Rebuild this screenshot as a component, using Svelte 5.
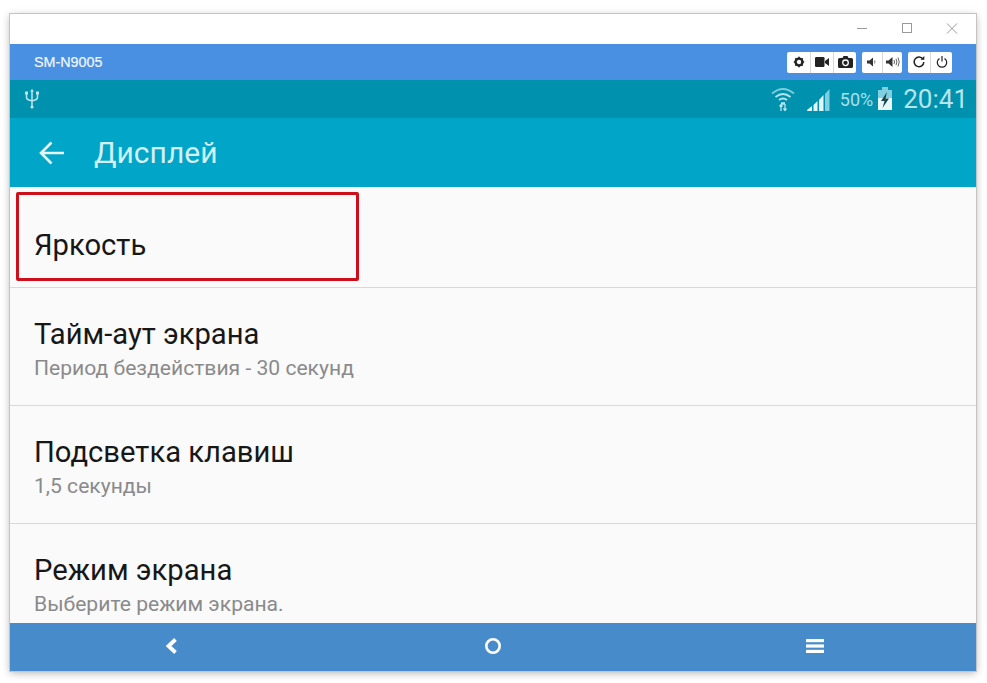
<script>
  const rows = [
    { title: "Тайм-аут экрана", sub: "Период бездействия - 30 секунд" },
    { title: "Подсветка клавиш", sub: "1,5 секунды" },
    { title: "Режим экрана", sub: "Выберите режим экрана." }
  ];
</script>

<main>
  <div class="window">
    <div class="titlebar">
      <svg class="winbtn" width="126" height="30" viewBox="0 0 126 30" fill="none" stroke="#9a9a9a" stroke-width="1">
        <path d="M12 14.500h10" />
        <rect x="57.500" y="9.500" width="9" height="9" />
        <path d="M102 9.500l10 10M112 9.500l-10 10" />
      </svg>
    </div>

    <div class="devicebar">
      <span class="devname">SM-N9005</span>
      <div class="tools">
        <div class="group">
          <button aria-label="settings">
            <svg width="12" height="12" viewBox="0 0 12 12">
              <circle cx="6" cy="6" r="3.400" fill="none" stroke="#222" stroke-width="2.400" />
              <path d="M6 .8v2M6 9.200v2M.8 6h2M9.200 6h2M2.300 2.300l1.400 1.400M8.300 8.300l1.400 1.400M9.700 2.300L8.300 3.700M3.700 8.300L2.300 9.700" stroke="#222" stroke-width="1.700" />
            </svg>
          </button>
          <button aria-label="video">
            <svg width="14" height="10" viewBox="0 0 14 10"><rect y="0" width="9.500" height="10" rx="1.200" fill="#222" /><path d="M10 4l4-3v8l-4-3z" fill="#222" /></svg>
          </button>
          <button aria-label="photo">
            <svg width="15" height="12" viewBox="0 0 15 12">
              <path d="M1.500 2h3l1-2h4l1 2h3A1.500 1.500 0 0 1 15 3.500V10.500A1.500 1.500 0 0 1 13.500 12H1.500A1.500 1.500 0 0 1 0 10.500V3.500A1.500 1.500 0 0 1 1.500 2z" fill="#222" />
              <circle cx="7.500" cy="6.800" r="2.800" fill="none" stroke="#fff" stroke-width="1.300" />
            </svg>
          </button>
        </div>
        <div class="group">
          <button class="narrow" aria-label="volume down">
            <svg width="10" height="10" viewBox="0 0 10 10"><path d="M0 3.500h2.500L6 .5v9L2.500 6.500H0z" fill="#333" /><path d="M7.500 3.500q1 1.500 0 3" fill="none" stroke="#777" /></svg>
          </button>
          <button class="narrow" aria-label="volume up">
            <svg width="14" height="12" viewBox="0 0 14 12"><path d="M0 4.500h2.500L6.500 1v10L2.500 7.500H0z" fill="#333" /><path d="M8 4q1 2 0 4M10 2.800q1.800 3.200 0 6.400M12 1.500q2.500 4.500 0 9" fill="none" stroke="#666" /></svg>
          </button>
        </div>
        <div class="group">
          <button class="narrow" aria-label="rotate">
            <svg width="12" height="12" viewBox="0 0 12 12"><path d="M10 3.200A4.800 4.800 0 1 0 10.800 6" fill="none" stroke="#222" stroke-width="1.500" /><path d="M7.500 3.800h3.800V0z" fill="#222" /></svg>
          </button>
          <button class="narrow" aria-label="power">
            <svg width="12" height="12" viewBox="0 0 12 12"><path d="M3.500 2.500a4.700 4.700 0 1 0 5 0" fill="none" stroke="#222" stroke-width="1.200" /><path d="M6 0v5.500" stroke="#222" stroke-width="1.200" /></svg>
          </button>
        </div>
      </div>
    </div>

    <div class="statusbar">
      <svg class="usb" width="14" height="20" viewBox="0 0 14 20" fill="none" stroke="#bfe6ee" stroke-width="1.500">
        <path d="M7 2v15.500M1.500 5v3q0 2.500 2.500 3l3 1 3-1q2.500-.5 2.500-3V5" />
        <path d="M7 0l2 2.500H5z" fill="#bfe6ee" stroke="none" />
        <circle cx="7" cy="18" r="1.600" fill="#bfe6ee" stroke="none" />
        <rect x="0" y="2.500" width="3" height="3" fill="#bfe6ee" stroke="none" />
        <rect x="11" y="2.500" width="3" height="3" fill="#bfe6ee" stroke="none" />
      </svg>
      <div class="status-right">
        <svg width="24" height="26" viewBox="0 0 24 26" fill="none" stroke="#b5e5ee" stroke-width="1.800">
          <path d="M1 7.500q11-9 22 0" stroke-opacity=".7" />
          <path d="M4.500 11q7.500-6 15 0" />
          <path d="M8 14q4-3 8 0" />
          <path d="M10 17.500h4" stroke-width="2.500" />
          <path d="M10 25v-6M8.500 20.500l1.500-2 1.500 2M14 18v6M12.500 22.500l1.500 2 1.500-2" stroke-width="1.300" />
        </svg>
        <svg class="signal" width="24" height="24" viewBox="0 0 24 24">
          <path d="M1 24v-1l5-4v5zM7.500 24v-6l4-4v10zM13 24V13l4.500-5v16z" fill="#e2f5f8" />
          <path d="M19 24V7l4.500-5v22z" fill="#7fcfe0" />
        </svg>
        <span class="pct">50%</span>
        <svg class="batt" width="16" height="24" viewBox="0 0 16 24">
          <path d="M5 0h6v3H5z" fill="#7fcfe0" />
          <rect x="1" y="3" width="14" height="8" fill="#7fcfe0" />
          <rect x="1" y="11" width="14" height="12" fill="#e8f8fa" />
          <path d="M10 5l-6 9h3.500l-2 7 6.500-9.500H8.500z" fill="#17474f" />
        </svg>
        <span class="clock">20:41</span>
      </div>
    </div>

    <header class="appbar">
      <svg width="26" height="24" viewBox="0 0 26 24" fill="none" stroke="#e6f7fa" stroke-width="2.600">
        <path d="M25 12H2M12.500 1.500L2 12l10.500 10.500" />
      </svg>
      <h1>Дисплей</h1>
    </header>

    <section class="list">
      <div class="row first">
        <div class="highlight"></div>
        <p class="title">Яркость</p>
      </div>
      {#each rows as row}
        <div class="row">
          <p class="title">{row.title}</p>
          <p class="sub">{row.sub}</p>
        </div>
      {/each}
    </section>

    <nav class="navbar">
      <svg width="14" height="18" viewBox="0 0 14 18" fill="none" stroke="#fff" stroke-width="3.800">
        <path d="M11.500 2.500L4.500 9l7 6.500" />
      </svg>
      <svg width="18" height="18" viewBox="0 0 18 18" fill="none" stroke="#fff" stroke-width="2.600">
        <circle cx="9" cy="9" r="6.700" />
      </svg>
      <svg width="18" height="14" viewBox="0 0 18 14" fill="#fff">
        <rect y="0" width="18" height="3.200" />
        <rect y="5.400" width="18" height="3.200" />
        <rect y="10.800" width="18" height="3.200" />
      </svg>
    </nav>
  </div>
</main>

<style>
  :global(body) {
    background: #fff;
  }

  main {
    padding: 14px 11px 12px 10px;
    font-family: Roboto, "Noto Sans", sans-serif;
  }

  .window {
    display: flex;
    flex-direction: column;
    height: 657px;
    background: #fafafa;
    box-shadow: 0 0 0 1px #c4c4c4, 0 2px 8px rgba(0, 0, 0, 0.3);
  }

  .titlebar {
    display: flex;
    justify-content: flex-end;
    height: 30px;
    background: #fff;
  }

  .winbtn {
    margin-right: 5px;
  }

  .devicebar {
    display: flex;
    align-items: center;
    justify-content: space-between;
    height: 36px;
    padding: 0 24px;
    background: #4a90e2;
  }

  .devname {
    font-family: "Liberation Sans", sans-serif;
    font-size: 14.300px;
    font-weight: 400;
    color: #f2f7fd;
    -webkit-text-stroke: 0.2px #f2f7fd;
  }

  .tools {
    display: flex;
    gap: 6px;
  }

  .group {
    display: flex;
    height: 21px;
    background: #fff;
    border-radius: 2px;
  }

  .group button {
    display: flex;
    align-items: center;
    justify-content: center;
    width: 23px;
    padding: 0;
    background: none;
    border: none;
    border-left: 1px solid #d8d8d8;
  }

  .group button:first-child {
    border-left: none;
  }

  .group button.narrow {
    width: 20px;
  }

  .group:last-child button.narrow {
    width: 22px;
  }

  .statusbar {
    display: flex;
    align-items: center;
    justify-content: space-between;
    height: 38px;
    padding: 0 8px 0 15px;
    background: #0091ae;
  }

  .status-right {
    display: flex;
    align-items: center;
  }

  .signal {
    margin-left: 11px;
  }

  .pct {
    margin-left: 10px;
    font-size: 18px;
    color: #a8e0ea;
  }

  .batt {
    margin-left: 4px;
  }

  .clock {
    margin-left: 10px;
    font-size: 26px;
    color: #b5e5ee;
  }

  .appbar {
    display: flex;
    align-items: center;
    gap: 29px;
    height: 69px;
    padding-left: 29px;
    background: #00a5c8;
  }

  h1 {
    margin: 0;
    font-size: 30px;
    font-weight: 400;
    color: #d3f0f6;
  }

  .list {
    flex: 1;
    overflow: hidden;
  }

  .row {
    position: relative;
    height: 118px;
    padding: 28px 0 0 24px;
    box-sizing: border-box;
    border-bottom: 1px solid #d9d9d9;
  }

  .row.first {
    height: 101px;
    padding-top: 40px;
  }

  .row:last-child {
    border-bottom: none;
  }

  .highlight {
    position: absolute;
    top: 5px;
    left: 6px;
    width: 343px;
    height: 89px;
    box-sizing: border-box;
    border: 3px solid #cc0f1a;
    border-radius: 2px;
  }

  .title {
    margin: 0;
    font-size: 29.200px;
    line-height: 36px;
    color: #171717;
  }

  .sub {
    margin: 0;
    font-size: 21.100px;
    line-height: 32px;
    color: #8a8a8c;
  }

  .navbar {
    display: grid;
    grid-template-columns: repeat(3, 1fr);
    justify-items: center;
    align-items: center;
    height: 48px;
    padding-bottom: 2px;
    box-sizing: border-box;
    background: #478bca;
  }
</style>
